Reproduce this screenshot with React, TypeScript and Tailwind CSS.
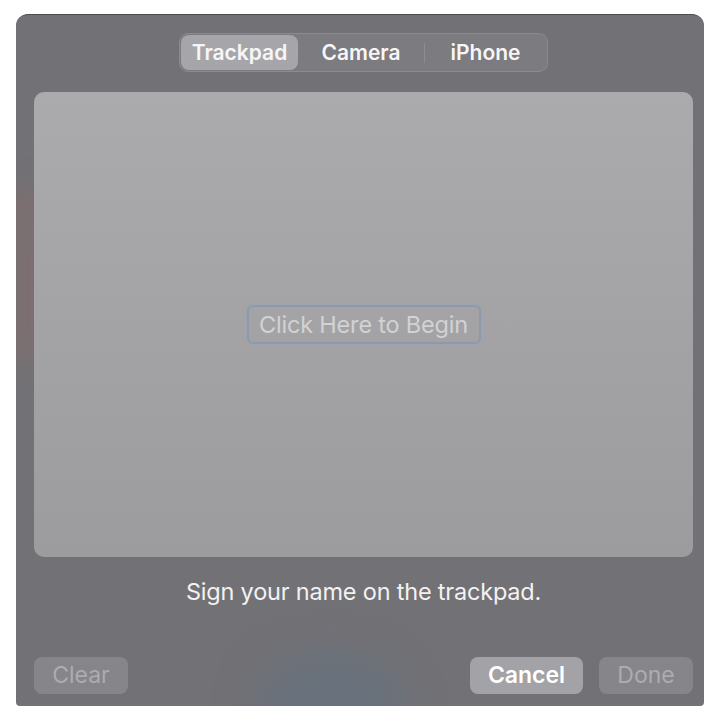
import React from 'react';

const font = { fontFamily: 'Inter, "Noto Sans", sans-serif' };

const Segmented: React.FC = () => {
    return (
        <div className="flex items-center h-[39px] rounded-[9px] bg-[#7c7b7f] border border-[#8b8a8e] p-[1px]">
            <div className="w-[117px] h-full flex items-center justify-center rounded-[8px] bg-[#a6a5a9] text-[21px] font-semibold text-white/90">
                Trackpad
            </div>
            <div className="w-[126px] h-full flex items-center justify-center text-[21px] font-semibold text-white/95">
                Camera
            </div>
            <div className="w-px h-[20px] bg-[#8d8c90]" />
            <div className="w-[121px] h-full flex items-center justify-center text-[21px] font-semibold text-white/95">
                iPhone
            </div>
        </div>
    );
};

export default function App() {
    return (
        <div className="w-[720px] h-[720px] bg-white pt-[14px] pl-[16px]" style={font}>
            <div className="relative w-[688px] h-[692px] bg-[#727175] rounded-t-[12px] rounded-b-[4px] border-t border-[#4d4c50] overflow-hidden flex flex-col items-stretch pl-[18px] pr-[11px]">
                <div className="absolute left-0 top-[170px] w-[24px] h-[180px] rounded-full bg-[#8a6e6c] blur-[14px] opacity-70" />
                <div className="absolute left-[240px] top-[640px] w-[150px] h-[110px] rounded-full bg-[#66727f] blur-[22px] opacity-80" />
                <div className="absolute left-[325px] top-[-1px] w-[46px] h-[3px] bg-[#727175]" />

                <div className="relative flex justify-center pt-[18px]">
                    <Segmented />
                </div>

                <div className="relative mt-[20px] h-[465px] rounded-[10px] bg-gradient-to-b from-[#ababad] to-[#9c9c9e] flex items-center justify-center">
                    <div className="h-[39px] w-[234px] rounded-[6px] border-2 border-[#8e9aab] shadow-[0_0_0_2px_rgba(150,165,185,0.35)] flex items-center justify-center text-[23.5px] tracking-[-0.2px] text-[#d2d2d4]">
                        Click Here to Begin
                    </div>
                </div>

                <div className="relative mt-[20px] h-[30px] flex items-center justify-center text-[23.5px] tracking-[-0.2px] text-[#f2f2f2]">
                    Sign your name on the trackpad.
                </div>

                <div className="relative mt-auto mb-[12px] flex items-center">
                    <div className="w-[94px] h-[37px] rounded-[8px] bg-[#868589] flex items-center justify-center text-[23px] text-[#adacb0]">
                        Clear
                    </div>
                    <div className="flex-1" />
                    <div className="w-[113px] h-[37px] rounded-[8px] bg-[#a3a2a6] flex items-center justify-center text-[23px] font-semibold text-white">
                        Cancel
                    </div>
                    <div className="ml-[16px] w-[94px] h-[37px] rounded-[8px] bg-[#868589] flex items-center justify-center text-[23px] text-[#adacb0]">
                        Done
                    </div>
                </div>
            </div>
        </div>
    );
}
